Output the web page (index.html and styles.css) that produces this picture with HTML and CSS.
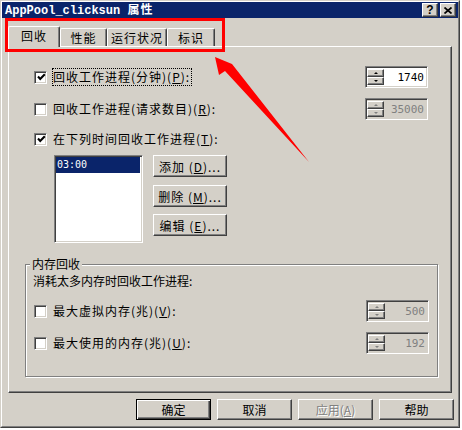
FILE: index.html
```html
<!DOCTYPE html>
<html lang="zh-CN">
<head>
<meta charset="utf-8">
<title>AppPool_clicksun 属性</title>
<link rel="stylesheet" href="styles.css">
</head>
<body>
<div class="window">
  <div class="frame">
    <div class="titlebar">
      <span class="title">AppPool_clicksun <span class="cjk">属性</span></span>
      <div class="caption-btns">
        <span class="cap-btn help">?</span>
        <span class="cap-btn"><svg width="8" height="7" viewBox="0 0 8 7"><path d="M0.5 0.5 L7.5 6.5 M7.5 0.5 L0.5 6.5" stroke="#000" stroke-width="1.7"/></svg></span>
      </div>
    </div>

    <div class="tabstrip">
      <div class="tab active w1">回收</div>
      <div class="tab w2">性能</div>
      <div class="tab w3">运行状况</div>
      <div class="tab w4">标识</div>
    </div>

    <div class="panel">
      <div class="upper">
        <div class="row">
          <div class="chk">
            <span class="box"><svg width="9" height="9" viewBox="0 0 9 9"><path d="M1 3.6 L3.2 5.9 L7.8 1.3" fill="none" stroke="#000" stroke-width="2.1"/></svg></span>
            <span class="lbl focus">回收工作进程(分钟)(<u>P</u>):</span>
          </div>
          <div class="spin">
            <div class="spin-btns"><span class="sb up"></span><span class="sb down"></span></div>
            <span class="spin-val">1740</span>
          </div>
        </div>

        <div class="row r2">
          <div class="chk">
            <span class="box"></span>
            <span class="lbl">回收工作进程(请求数目)(<u>R</u>):</span>
          </div>
          <div class="spin disabled">
            <div class="spin-btns"><span class="sb up"></span><span class="sb down"></span></div>
            <span class="spin-val">35000</span>
          </div>
        </div>

        <div class="row r3">
          <div class="chk">
            <span class="box"><svg width="9" height="9" viewBox="0 0 9 9"><path d="M1 3.6 L3.2 5.9 L7.8 1.3" fill="none" stroke="#000" stroke-width="2.1"/></svg></span>
            <span class="lbl">在下列时间回收工作进程(<u>T</u>):</span>
          </div>
        </div>

        <div class="listrow">
          <div class="listbox">
            <div class="item sel">03:00</div>
          </div>
          <div class="listbtns">
            <div class="btn lb">添加 (<u>D</u>)...</div>
            <div class="btn lb b2">删除 (<u>M</u>)...</div>
            <div class="btn lb b3">编辑 (<u>E</u>)...</div>
          </div>
        </div>
      </div>

      <fieldset class="group">
        <legend>内存回收</legend>
        <div class="gtext">消耗太多内存时回收工作进程:</div>
        <div class="row g1">
          <div class="chk">
            <span class="box"></span>
            <span class="lbl">最大虚拟内存(兆)(<u>V</u>):</span>
          </div>
          <div class="spin disabled">
            <div class="spin-btns"><span class="sb up"></span><span class="sb down"></span></div>
            <span class="spin-val">500</span>
          </div>
        </div>
        <div class="row g2">
          <div class="chk">
            <span class="box"></span>
            <span class="lbl">最大使用的内存(兆)(<u>U</u>):</span>
          </div>
          <div class="spin disabled">
            <div class="spin-btns"><span class="sb up"></span><span class="sb down"></span></div>
            <span class="spin-val">192</span>
          </div>
        </div>
      </fieldset>
    </div>

    <div class="dlg-btns">
      <div class="btn db default">确定</div>
      <div class="btn db">取消</div>
      <div class="btn db off">应用(<u>A</u>)</div>
      <div class="btn db">帮助</div>
    </div>
  </div>
</div>

<div class="callout-box"></div>
<svg class="callout-arrow" width="462" height="430" viewBox="0 0 462 430">
  <polygon points="215,57 232,64 309,162 225,71 219,75" fill="#ff0000"/>
</svg>
</body>
</html>
```

FILE: styles.css
```css
* { box-sizing: border-box; }

html, body {
  margin: 0;
  padding: 0;
}

body {
  position: relative;
  width: 462px;
  height: 430px;
  overflow: hidden;
  background: #ffffff;
  font-family: "Noto Sans CJK SC", "Noto Sans", sans-serif;
  font-size: 12px;
  color: #000;
}

.window {
  width: 460px;
  height: 428px;
  background: #d4d0c8;
  border: 1px solid;
  border-color: #d4d0c8 #404040 #404040 #d4d0c8;
}

.frame {
  height: 100%;
  border: 1px solid;
  border-color: #ffffff #808080 #808080 #ffffff;
}

/* title bar */
.titlebar {
  height: 16px;
  background: #0a246a;
  display: flex;
  align-items: center;
  justify-content: space-between;
  padding: 0 2px 0 3px;
}

.title {
  color: #fff;
  font-family: "Liberation Mono", "Noto Sans CJK SC", monospace;
  font-weight: bold;
  font-size: 12px;
  line-height: 16px;
  white-space: nowrap;
}

.title .cjk {
  font-family: "Noto Sans CJK SC", sans-serif;
  letter-spacing: 1px;
}

.caption-btns {
  display: flex;
  gap: 2px;
}

.cap-btn {
  width: 16px;
  height: 14px;
  background: #d4d0c8;
  border: 1px solid;
  border-color: #fff #404040 #404040 #fff;
  box-shadow: inset -1px -1px 0 #808080;
  display: flex;
  align-items: center;
  justify-content: center;
}

.cap-btn.help {
  font-family: "Liberation Sans", sans-serif;
  font-weight: bold;
  font-size: 12px;
  line-height: 12px;
}

/* tabs */
.tabstrip {
  height: 28px;
  display: flex;
  align-items: flex-end;
  padding-left: 6px;
}

.tab {
  height: 18px;
  background: #d4d0c8;
  border-top: 1px solid #fff;
  border-left: 1px solid #fff;
  border-right: 1px solid #404040;
  box-shadow: inset -1px 0 0 #808080;
  border-radius: 2px 2px 0 0;
  text-align: center;
  padding-top: 2px;
  line-height: 14px;
  letter-spacing: 1px;
}

.tab.active {
  position: relative;
  z-index: 1;
  height: 21px;
  margin-bottom: -1px;
  padding-top: 2px;
}

.w1 { width: 52px; }
.w2 { width: 47px; }
.w3 { width: 60px; }
.w4 { width: 48px; }

/* panel */
.panel {
  margin-left: 6px;
  width: 444px;
  height: 347px;
  border-top: 1px solid #fff;
  border-left: 1px solid #fff;
  border-right: 1px solid #404040;
  border-bottom: 1px solid #404040;
  box-shadow: inset -1px -1px 0 #808080;
  padding-top: 19px;
}

.upper {
  padding: 0 23px 0 25px;
}

.row {
  height: 22px;
  display: flex;
  align-items: center;
  justify-content: space-between;
}

.r2 { margin-top: 10px; }
.r3 { margin-top: 8px; }

.chk {
  display: flex;
  align-items: center;
  gap: 5px;
}

.box {
  width: 13px;
  height: 13px;
  background: #fff;
  border: 1px solid;
  border-color: #808080 #fff #fff #808080;
  box-shadow: inset 1px 1px 0 #404040, inset -1px -1px 0 #d4d0c8;
  display: flex;
  align-items: center;
  justify-content: center;
  padding: 1px 0 0 1px;
}

.box svg { display: block; }

.lbl {
  border: 1px solid transparent;
  padding: 0 1px 1px 0;
  line-height: 15px;
  letter-spacing: 1px;
  white-space: nowrap;
}

.lbl.focus {
  border: 1px dotted #000;
}

/* spinners */
.spin {
  width: 63px;
  height: 22px;
  background: #fff;
  border: 1px solid;
  border-color: #808080 #fff #fff #808080;
  box-shadow: inset 1px 1px 0 #404040, inset -1px -1px 0 #d4d0c8;
  padding: 2px 3px 2px 1px;
  display: flex;
}

.spin-btns {
  width: 17px;
  display: flex;
  flex-direction: column;
}

.sb {
  height: 9px;
  background: #d4d0c8;
  border: 1px solid;
  border-color: #fff #404040 #404040 #fff;
  box-shadow: inset -1px -1px 0 #808080;
  display: flex;
  align-items: center;
  justify-content: center;
}

.sb::after {
  content: "";
  width: 0;
  height: 0;
  border-left: 2px solid transparent;
  border-right: 2px solid transparent;
}

.sb.up::after { border-bottom: 2px solid #000; }
.sb.down::after { border-top: 2px solid #000; }

.spin-val {
  flex: 1;
  text-align: right;
  font-family: "DejaVu Sans Mono", "Liberation Mono", monospace;
  font-size: 11px;
  line-height: 18px;
}

.spin.disabled {
  background: #d4d0c8;
}

.spin.disabled .spin-val {
  color: #808080;
}

.spin.disabled .sb.up::after { border-bottom-color: #808080; }
.spin.disabled .sb.down::after { border-top-color: #808080; }

/* list */
.listrow {
  margin-top: 5px;
  margin-left: 20px;
  display: flex;
  align-items: flex-start;
}

.listbox {
  width: 89px;
  height: 88px;
  background: #fff;
  border: 1px solid;
  border-color: #808080 #fff #fff #808080;
  box-shadow: inset 1px 1px 0 #404040, inset -1px -1px 0 #d4d0c8;
  padding: 1px 2px 2px 1px;
}

.item {
  height: 16px;
  line-height: 16px;
  font-family: "DejaVu Sans Mono", "Liberation Mono", monospace;
  font-size: 10px;
  padding-left: 1px;
}

.item.sel {
  background: #0a246a;
  color: #fff;
}

.listbtns {
  margin-left: 10px;
  display: flex;
  flex-direction: column;
}

.btn {
  background: #d4d0c8;
  border: 1px solid;
  border-color: #fff #404040 #404040 #fff;
  box-shadow: inset -1px -1px 0 #808080;
  display: flex;
  align-items: center;
  justify-content: center;
  white-space: nowrap;
}

.lb {
  width: 74px;
  height: 22px;
  letter-spacing: 1px;
}

.b2 { margin-top: 8px; }
.b3 { margin-top: 7px; }

/* group box */
.group {
  margin: 14px 13px 0 16px;
  padding: 3px 8px 22px 7px;
  border: 1px solid #808080;
  box-shadow: inset 1px 1px 0 #fff, 1px 1px 0 #fff;
  min-width: 0;
}

.group legend {
  margin-left: -3px;
  padding: 0 2px;
  line-height: 14px;
  background: #d4d0c8;
}

.gtext {
  line-height: 14px;
}

.group .row { padding-left: 1px; }
.g1 { margin-top: 12px; }
.g2 { margin-top: 10px; }

/* dialog buttons */
.dlg-btns {
  margin-top: 6px;
  padding-right: 4px;
  display: flex;
  justify-content: flex-end;
  gap: 6px;
}

.db {
  width: 75px;
  height: 21px;
}

.db.default {
  border: 1px solid #000;
  box-shadow: inset 1px 1px 0 #fff, inset -1px -1px 0 #404040, inset -2px -2px 0 #808080;
}

.db.off {
  color: #808080;
  text-shadow: 1px 1px 0 #fff;
}

/* annotation overlay */
.callout-box {
  position: absolute;
  left: 5px;
  top: 18px;
  width: 220px;
  height: 34px;
  border: 3px solid #ff0000;
}

.callout-arrow {
  position: absolute;
  left: 0;
  top: 0;
  pointer-events: none;
}
```
